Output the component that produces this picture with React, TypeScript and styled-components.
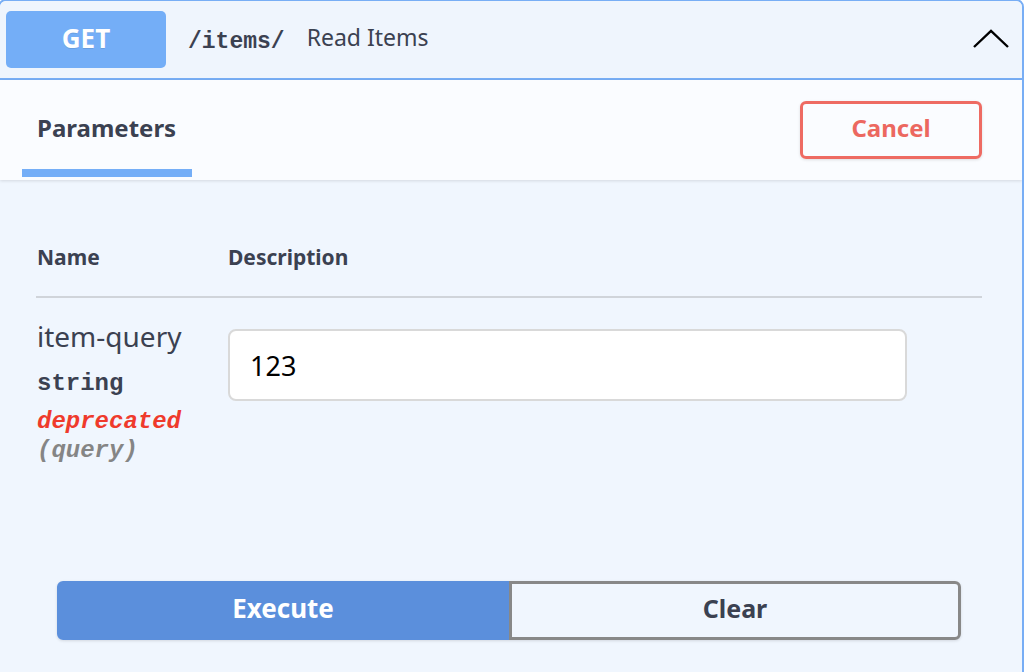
import React from 'react';
import styled, { createGlobalStyle } from 'styled-components';

const GlobalStyle = createGlobalStyle`
	html, body {
		margin: 0;
		padding: 0;
		background: #ffffff;
		overflow: hidden;
	}
	body {
		font-family: "Noto Sans", "Open Sans", sans-serif;
		color: #3b4151;
	}
`;

const Card = styled.div`
	width: 1026px;
	height: 700px;
	margin: -1px 0 0 -2px;
	border: 2px solid #78aef5;
	border-radius: 8px;
	background: #f0f6fe;
	box-sizing: border-box;
	overflow: hidden;
`;

const Summary = styled.div`
	height: 79px;
	display: flex;
	align-items: center;
	padding: 0 12px 0 6px;
	background: #eff5fd;
	border-bottom: 2px solid #78aef5;
	box-sizing: border-box;
`;

const Method = styled.span`
	width: 160px;
	height: 57px;
	padding-bottom: 4px;
	box-sizing: border-box;
	display: flex;
	align-items: center;
	justify-content: center;
	background: #74aef7;
	border-radius: 5px;
	color: #fff;
	font-size: 26px;
	font-weight: 700;
	text-shadow: 0 1px 0 rgba(0, 0, 0, 0.1);
`;

const Path = styled.span`
	margin: 4px 0 0 22px;
	font-family: "Liberation Mono", "DejaVu Sans Mono", monospace;
	font-weight: 700;
	font-size: 23px;
	color: #3b4151;
`;

const Description = styled.span`
	margin: 0 0 6px 22px;
	font-size: 23px;
	color: #3b4151;
	flex: 1;
`;

const Arrow = styled.svg`
	width: 36px;
	height: 20px;
	margin: 0 1px 2px 0;
`;

const TabHeader = styled.div`
	height: 100px;
	display: flex;
	align-items: stretch;
	justify-content: space-between;
	padding: 0 40px 0 22px;
	background: #fafcff;
	box-shadow: 0 1px 3px rgba(0, 0, 0, 0.12);
	position: relative;
`;

const Tab = styled.div`
	width: 170px;
	padding: 0 15px 3px;
	display: flex;
	flex-direction: column;
	justify-content: flex-end;
	box-sizing: border-box;
	font-size: 24px;
	line-height: 32px;
	font-weight: 700;
	color: #3b4151;

	&::after {
		content: '';
		display: block;
		height: 8px;
		margin: 25px -15px 0;
		background: #74aef7;
	}
`;

const CancelButton = styled.button`
	align-self: flex-start;
	margin-top: 21px;
	width: 182px;
	height: 58px;
	padding: 0 0 5px;
	border: 3px solid #ee6b63;
	border-radius: 6px;
	background: transparent;
	box-shadow: 0 1px 3px rgba(0, 0, 0, 0.12);
	font-family: inherit;
	font-size: 24px;
	font-weight: 700;
	color: #ec6860;
`;

const Body = styled.div`
	padding: 48px 40px 0 36px;
`;

const Table = styled.div`
	display: grid;
	grid-template-columns: 192px 1fr;
`;

const HeadCell = styled.div<{ first?: boolean }>`
	height: 70px;
	padding: 14px 0 0 ${(p) => (p.first ? '1px' : '0')};
	box-sizing: border-box;
	font-size: 21px;
	line-height: 30px;
	font-weight: 700;
	color: #3b4151;
	border-bottom: 2px solid #d0d4da;
	margin-bottom: 31px;
`;

const NameCell = styled.div`
	padding-left: 1px;
	display: flex;
	flex-direction: column;
`;

const ParamName = styled.div`
	font-size: 28px;
	line-height: 34px;
	margin-top: -10px;
	color: #3b4151;
`;

const Mono = styled.div<{ tone: 'type' | 'deprecated' | 'in' }>`
	font-family: "Liberation Mono", "DejaVu Sans Mono", monospace;
	font-weight: 700;
	font-size: 24px;
	line-height: 29px;
	font-style: ${(p) => (p.tone === 'type' ? 'normal' : 'italic')};
	color: ${(p) => (p.tone === 'deprecated' ? '#ef3a2c' : p.tone === 'in' ? '#858585' : '#3b4151')};
	margin-top: ${(p) => (p.tone === 'type' ? '16px' : p.tone === 'deprecated' ? '9px' : '0')};
`;

const Input = styled.input`
	width: 679px;
	height: 72px;
	box-sizing: border-box;
	padding: 0 20px;
	border: 2px solid #d9d9d9;
	border-radius: 8px;
	background: #fff;
	font-family: inherit;
	font-size: 27px;
	color: #000;
	outline: none;
`;

const Actions = styled.div`
	margin: 116px 21px 0 21px;
	display: grid;
	grid-template-columns: 1fr 1fr;
	height: 59px;
	box-shadow: 0 1px 3px rgba(0, 0, 0, 0.12);
	border-radius: 6px;
`;

const ActionButton = styled.button<{ primary?: boolean }>`
	height: 59px;
	padding: 0 0 5px;
	font-family: inherit;
	font-size: ${(p) => (p.primary ? '26px' : '25px')};
	font-weight: 700;
	color: ${(p) => (p.primary ? '#fff' : '#3b4151')};
	background: ${(p) => (p.primary ? '#5b8fdc' : 'transparent')};
	border: ${(p) => (p.primary ? '3px solid #5b8fdc' : '3px solid #888888')};
	border-radius: ${(p) => (p.primary ? '6px 0 0 6px' : '0 6px 6px 0')};
`;

const App = () => {
	return (
		<>
			<GlobalStyle />
			<Card>
				<Summary>
					<Method>GET</Method>
					<Path>/items/</Path>
					<Description>Read Items</Description>
					<Arrow viewBox="0 0 36 20">
						<path d="M1 18 L18 2 L35 18" fill="none" stroke="#000" strokeWidth="2.4" />
					</Arrow>
				</Summary>
				<TabHeader>
					<Tab>Parameters</Tab>
					<CancelButton>Cancel</CancelButton>
				</TabHeader>
				<Body>
					<Table>
						<HeadCell first>Name</HeadCell>
						<HeadCell>Description</HeadCell>
						<NameCell>
							<ParamName>item-query</ParamName>
							<Mono tone="type">string</Mono>
							<Mono tone="deprecated">deprecated</Mono>
							<Mono tone="in">(query)</Mono>
						</NameCell>
						<div>
							<Input defaultValue="123" />
						</div>
					</Table>
					<Actions>
						<ActionButton primary>Execute</ActionButton>
						<ActionButton>Clear</ActionButton>
					</Actions>
				</Body>
			</Card>
		</>
	);
};

export default App;
